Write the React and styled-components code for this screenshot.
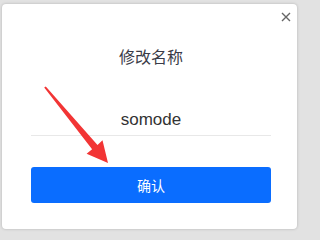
import React, { useState } from "react";
import styled, { createGlobalStyle } from "styled-components";

const GlobalStyle = createGlobalStyle`
  html, body {
    margin: 0;
    padding: 0;
    background: #e2e2e2;
    font-family: "Noto Sans", "Noto Sans CJK SC", sans-serif;
  }
`;

const Page = styled.div`
  width: 301px;
  height: 232px;
  padding: 4px 0 0 2px;
  box-sizing: border-box;
  overflow: hidden;
`;

const Modal = styled.div`
  position: relative;
  width: 295px;
  height: 225px;
  box-sizing: border-box;
  background: #fff;
  border-radius: 4px;
  box-shadow: 0 0 3px rgba(0, 0, 0, 0.22);
  display: flex;
  flex-direction: column;
  align-items: center;
  padding: 40px 0 0 3px;
`;

const Close = styled.button`
  position: absolute;
  top: 7px;
  right: 5px;
  width: 12px;
  height: 12px;
  padding: 0;
  border: none;
  background: none;
  cursor: pointer;
  display: flex;
  align-items: center;
  justify-content: center;
`;

const Title = styled.h3`
  margin: 0;
  font-family: "Noto Sans CJK SC", sans-serif;
  font-size: 16px;
  line-height: 24px;
  font-weight: 400;
  color: #3a3c48;
`;

const NameInput = styled.input`
  margin-top: 36px;
  width: 240px;
  height: 32px;
  box-sizing: border-box;
  padding: 0;
  border: none;
  border-bottom: 1px solid #e8e8e8;
  outline: none;
  text-align: center;
  font-family: "Liberation Sans", Arial, sans-serif;
  font-size: 17px;
  color: #333;
  background: transparent;
`;

const Confirm = styled.button`
  margin-top: 31px;
  width: 240px;
  height: 36px;
  border: none;
  border-radius: 3px;
  background: #0a6dff;
  color: #fff;
  font-family: "Noto Sans CJK SC", sans-serif;
  font-size: 14px;
  cursor: pointer;
`;

const Arrow = styled.svg`
  position: absolute;
  left: 0;
  top: 0;
  pointer-events: none;
`;

function App() {
  const [name, setName] = useState("somode");

  return (
    <Page>
      <GlobalStyle />
      <Modal>
        <Close aria-label="close">
          <svg width="10" height="10" viewBox="0 0 10 10">
            <path d="M1 1 L9 9 M9 1 L1 9" stroke="#666" strokeWidth="1.4" />
          </svg>
        </Close>
        <Title>修改名称</Title>
        <NameInput value={name} onChange={(e) => setName(e.target.value)} />
        <Confirm>确认</Confirm>
        <Arrow width="295" height="225">
          <polygon
            points="42.2,83.6 43.8,82.4 95.5,140.9 100.5,136.2 106,159 84.6,149.8 90.1,145.3"
            fill="#f23535"
          />
        </Arrow>
      </Modal>
    </Page>
  );
}

export default App;
